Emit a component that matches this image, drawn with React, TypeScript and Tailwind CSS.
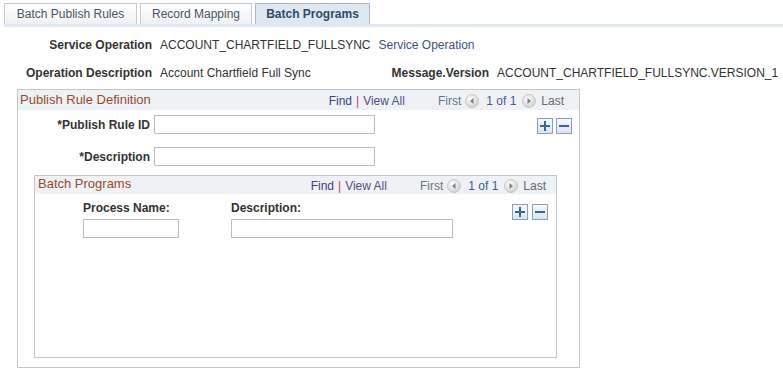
import React from "react";

const ArrowButton: React.FC<{ dir: "left" | "right" }> = ({ dir }) => (
  <svg width="14" height="14" viewBox="0 0 14 14" aria-hidden="true">
    <defs>
      <radialGradient id={`g-${dir}`} cx="40%" cy="35%" r="70%">
        <stop offset="0%" stopColor="#ffffff" />
        <stop offset="100%" stopColor="#cdcdcd" />
      </radialGradient>
    </defs>
    <circle cx="7" cy="7" r="6.5" fill={`url(#g-${dir})`} stroke="#c8c8c8" />
    {dir === "left" ? (
      <path d="M8.5 4 L5 7 L8.5 10 Z" fill="#808080" />
    ) : (
      <path d="M5.5 4 L9 7 L5.5 10 Z" fill="#808080" />
    )}
  </svg>
);

const RowButton: React.FC<{ kind: "add" | "del" }> = ({ kind }) => (
  <div className="w-[16px] h-[16px] border border-[#86a1c2] bg-gradient-to-b from-[#f7fafc] to-[#dbe5ef] flex items-center justify-center">
    <svg width="10" height="10" viewBox="0 0 10 10" aria-hidden="true">
      <path d="M0 5h10" stroke="#2f67a8" strokeWidth="2" />
      {kind === "add" && <path d="M5 0v10" stroke="#2f67a8" strokeWidth="2" />}
    </svg>
  </div>
);

const Nav: React.FC = () => (
  <div className="flex items-center whitespace-nowrap">
    <span className="text-[#3b3d98]">Find</span>
    <span className="mx-[4px] text-[#c93a6b]">|</span>
    <span className="text-[#504f8a]">View All</span>
    <span className="ml-[33px] text-[#66768a]">First</span>
    <span className="ml-[4px] flex">
      <ArrowButton dir="left" />
    </span>
    <span className="ml-[7px] text-[#3f5a94]">1 of 1</span>
    <span className="ml-[6px] flex">
      <ArrowButton dir="right" />
    </span>
    <span className="ml-[5px] text-[#5f6a78]">Last</span>
  </div>
);

const Tab: React.FC<{ label: string; width: string; active?: boolean }> = ({
  label,
  width,
  active,
}) => (
  <div
    className={
      active
        ? `${width} h-[21px] flex items-center justify-center border border-b-0 border-[#a9b9cb] bg-[#dfe8f2] font-bold text-[#2f4a68]`
        : `${width} h-[21px] flex items-center justify-center border border-b-0 border-[#c6cace] bg-gradient-to-b from-[#ffffff] to-[#eef1f4] text-[#4a5562]`
    }
  >
    {label}
  </div>
);

export default function App() {
  return (
    <div className="w-[783px] h-[375px] overflow-hidden bg-white font-['Liberation_Sans',Arial,sans-serif] text-[12px] leading-[14px] text-[#333]">
      {/* tabs */}
      <div className="pt-[3px] pl-[4px]">
        <div className="flex items-end gap-[3px]">
          <Tab label="Batch Publish Rules" width="w-[133px]" />
          <Tab label="Record Mapping" width="w-[112px]" />
          <Tab label="Batch Programs" width="w-[115px]" active />
        </div>
        <div className="h-[3px] bg-[#dfe8f2]" />
      </div>

      {/* header fields */}
      <div className="mt-[11px] flex whitespace-nowrap">
        <div className="w-[152px] text-right font-bold">Service Operation</div>
        <div className="ml-[8px]">ACCOUNT_CHARTFIELD_FULLSYNC</div>
        <div className="ml-[8px] text-[#35568a]">Service Operation</div>
      </div>
      <div className="mt-[14px] flex whitespace-nowrap">
        <div className="w-[152px] text-right font-bold">Operation Description</div>
        <div className="ml-[8px] w-[222px]">Account Chartfield Full Sync</div>
        <div className="w-[107px] text-right font-bold">Message.Version</div>
        <div className="ml-[8px]">ACCOUNT_CHARTFIELD_FULLSYNC.VERSION_1</div>
      </div>

      {/* Publish Rule Definition */}
      <div className="mt-[9px] ml-[17px] w-[563px] h-[279px] border border-[#c6c6c6]">
        <div className="h-[20px] bg-[#eef2f4] flex items-center pl-[2px] pr-[15px]">
          <span className="text-[#9a4a2c] text-[13px]">Publish Rule Definition</span>
          <div className="ml-auto mt-[2px]">
            <Nav />
          </div>
        </div>

        <div className="flex">
          <div className="flex flex-col">
            <div className="mt-[5px] flex items-center">
              <div className="w-[132px] text-right font-bold">*Publish Rule ID</div>
              <div className="ml-[4px] w-[221px] h-[19px] border border-[#bdbdbd]" />
            </div>
            <div className="mt-[13px] flex items-center">
              <div className="w-[132px] text-right font-bold">*Description</div>
              <div className="ml-[4px] w-[221px] h-[19px] border border-[#bdbdbd]" />
            </div>
          </div>
          <div className="ml-auto mr-[7px] mt-[8px] flex gap-[3px]">
            <RowButton kind="add" />
            <RowButton kind="del" />
          </div>
        </div>

        {/* Batch Programs */}
        <div className="mt-[9px] ml-[16px] w-[523px] h-[183px] border border-[#c6c6c6]">
          <div className="h-[18px] bg-[#eef2f4] flex items-center pl-[3px] pr-[10px]">
            <span className="text-[#9a4a2c] text-[13px] -mt-[2px]">Batch Programs</span>
            <div className="ml-auto mt-[2px]">
              <Nav />
            </div>
          </div>
          <div className="flex">
            <div className="pl-[48px] pt-[7px] flex">
              <div className="w-[148px] flex flex-col">
                <div className="font-bold">Process Name:</div>
                <div className="mt-[4px] w-[96px] h-[19px] border border-[#bdbdbd]" />
              </div>
              <div className="flex flex-col">
                <div className="font-bold">Description:</div>
                <div className="mt-[4px] w-[222px] h-[19px] border border-[#bdbdbd]" />
              </div>
            </div>
            <div className="ml-auto mr-[8px] mt-[10px] flex gap-[4px]">
              <RowButton kind="add" />
              <RowButton kind="del" />
            </div>
          </div>
        </div>
      </div>
    </div>
  );
}
